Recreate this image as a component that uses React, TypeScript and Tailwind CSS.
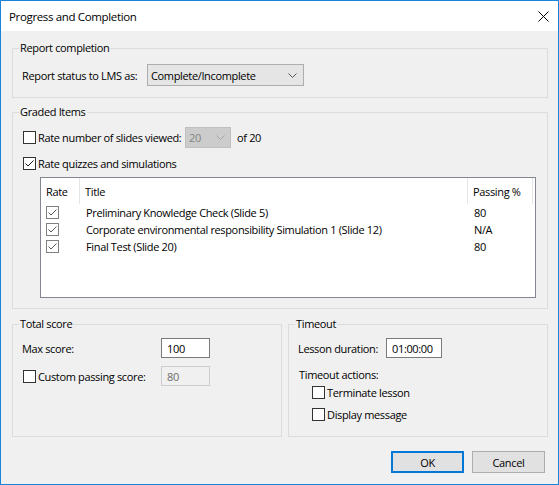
import React from "react";

const Check = ({ color = "#1a1a1a" }: { color?: string }) => (
  <svg width="11" height="11" viewBox="0 0 11 11" className="block">
    <polyline points="1.5,5.5 4,8 9.5,2.5" fill="none" stroke={color} strokeWidth="1" />
  </svg>
);

const Box = ({ checked = false, gray = false }: { checked?: boolean; gray?: boolean }) => (
  <span
    className={
      gray
        ? "flex h-[13px] w-[13px] shrink-0 items-center justify-center border border-[#808080] bg-white"
        : "flex h-[13px] w-[13px] shrink-0 items-center justify-center border border-[#333333] bg-white"
    }
  >
    {checked ? <Check color={gray ? "#5a5a5a" : "#1a1a1a"} /> : null}
  </span>
);

const Chevron = ({ color }: { color: string }) => (
  <svg width="9" height="5" viewBox="0 0 9 5" className="block">
    <polyline points="0.5,0.5 4.5,4.5 8.5,0.5" fill="none" stroke={color} strokeWidth="1" />
  </svg>
);

const Group = ({
  title,
  className,
  children,
}: {
  title: string;
  className: string;
  children: React.ReactNode;
}) => (
  <div className={"relative border border-[#dcdcdc] " + className}>
    <span className="absolute left-[6px] top-[-9px] bg-[#f0f0f0] px-[1px] leading-[15px]">{title}</span>
    {children}
  </div>
);

const rows = [
  { title: "Preliminary Knowledge Check (Slide 5)", pass: "80" },
  { title: "Corporate environmental responsibility Simulation 1 (Slide 12)", pass: "N/A" },
  { title: "Final Test (Slide 20)", pass: "80" },
];

export default function App() {
  return (
    <div
      className="flex h-[485px] w-[559px] flex-col whitespace-nowrap border border-[#1883d7] bg-[#f0f0f0] text-[11px] leading-[15px] tracking-[-0.35px] text-black"
      style={{ fontFamily: '"Open Sans", "Noto Sans", sans-serif' }}
    >
      <div className="flex h-[30px] shrink-0 items-center justify-between bg-white pl-[8px] pr-[9px] text-[11.5px]">
        <span>Progress and Completion</span>
        <svg width="11" height="11" viewBox="0 0 11 11" className="block">
          <path d="M0.5 0.5 L10.5 10.5 M10.5 0.5 L0.5 10.5" stroke="#000" strokeWidth="1" />
        </svg>
      </div>

      <div className="flex flex-1 flex-col pl-[11px] pr-[10px]">
        <Group title="Report completion" className="mt-[17px] h-[50px]">
          <div className="flex items-center pl-[9px] pt-[15px]">
            <span className="w-[125px]">Report status to LMS as:</span>
            <div className="flex h-[22px] w-[157px] items-center justify-between border border-[#adadad] bg-[#e5e5e5] pl-[3px] pr-[6px]">
              <span>Complete/Incomplete</span>
              <Chevron color="#555555" />
            </div>
          </div>
        </Group>

        <Group title="Graded Items" className="mt-[14px] h-[197px]">
          <div className="mt-[14px] flex h-[21px] items-center pl-[10px]">
            <Box />
            <span className="ml-[2px] w-[147px]">Rate number of slides viewed:</span>
            <div className="flex h-[21px] w-[46px] items-center justify-between border border-[#bfbfbf] bg-[#cccccc] pl-[3px] pr-[5px] text-[#838383]">
              <span>20</span>
              <Chevron color="#a6a6a6" />
            </div>
            <span className="ml-[6px]">of 20</span>
          </div>
          <div className="mt-[7px] flex h-[16px] items-center pl-[10px]">
            <Box checked />
            <span className="ml-[2px]">Rate quizzes and simulations</span>
          </div>
          <div className="ml-[27px] mt-[6px] h-[121px] w-[496px] border border-[#828790] bg-white">
            <div className="flex h-[26px] items-center">
              <div className="flex h-full w-[39px] items-center border-r border-[#e5e5e5] pl-[5px]">Rate</div>
              <div className="flex h-full w-[388px] items-center border-r border-[#e5e5e5] pl-[5px]">Title</div>
              <div className="flex h-full w-[65px] items-center border-r border-[#e5e5e5] pl-[5px]">Passing %</div>
            </div>
            {rows.map((r) => (
              <div key={r.title} className="flex h-[17px] items-center">
                <div className="flex w-[39px] items-center pl-[5px]">
                  <Box checked gray />
                </div>
                <div className="w-[388px] pl-[6px]">{r.title}</div>
                <div className="pl-[6px]">{r.pass}</div>
              </div>
            ))}
          </div>
        </Group>

        <div className="mt-[15px] flex gap-[6px]">
          <Group title="Total score" className="h-[113px] w-[270px]">
            <div className="mt-[13px] flex h-[20px] items-center pl-[9px]">
              <span className="w-[139px]">Max score:</span>
              <div className="flex h-[20px] w-[49px] items-center border border-[#7a7a7a] bg-white pl-[5px]">100</div>
            </div>
            <div className="mt-[8px] flex h-[20px] items-center pl-[10px]">
              <Box />
              <span className="ml-[2px] w-[123px]">Custom passing score:</span>
              <div className="flex h-[20px] w-[49px] items-center border border-[#cccccc] bg-[#f0f0f0] pl-[5px] text-[#6d6d6d]">
                80
              </div>
            </div>
          </Group>
          <Group title="Timeout" className="h-[113px] flex-1">
            <div className="mt-[13px] flex h-[20px] items-center pl-[9px]">
              <span className="w-[88px]">Lesson duration:</span>
              <div className="flex h-[20px] w-[56px] items-center border border-[#7a7a7a] bg-white pl-[5px]">01:00:00</div>
            </div>
            <div className="mt-[9px] pl-[10px]">Timeout actions:</div>
            <div className="mt-[2px] flex h-[16px] items-center pl-[23px]">
              <Box />
              <span className="ml-[2px]">Terminate lesson</span>
            </div>
            <div className="mt-[6px] flex h-[16px] items-center pl-[23px]">
              <Box />
              <span className="ml-[2px]">Display message</span>
            </div>
          </Group>
        </div>

        <div className="mr-[3px] mt-[14px] flex justify-end gap-[8px]">
          <button className="flex h-[22px] w-[73px] items-center justify-center border-2 border-[#0078d7] bg-[#e1e1e1]">
            OK
          </button>
          <button className="flex h-[22px] w-[73px] items-center justify-center border border-[#adadad] bg-[#e1e1e1]">
            Cancel
          </button>
        </div>
      </div>
    </div>
  );
}
